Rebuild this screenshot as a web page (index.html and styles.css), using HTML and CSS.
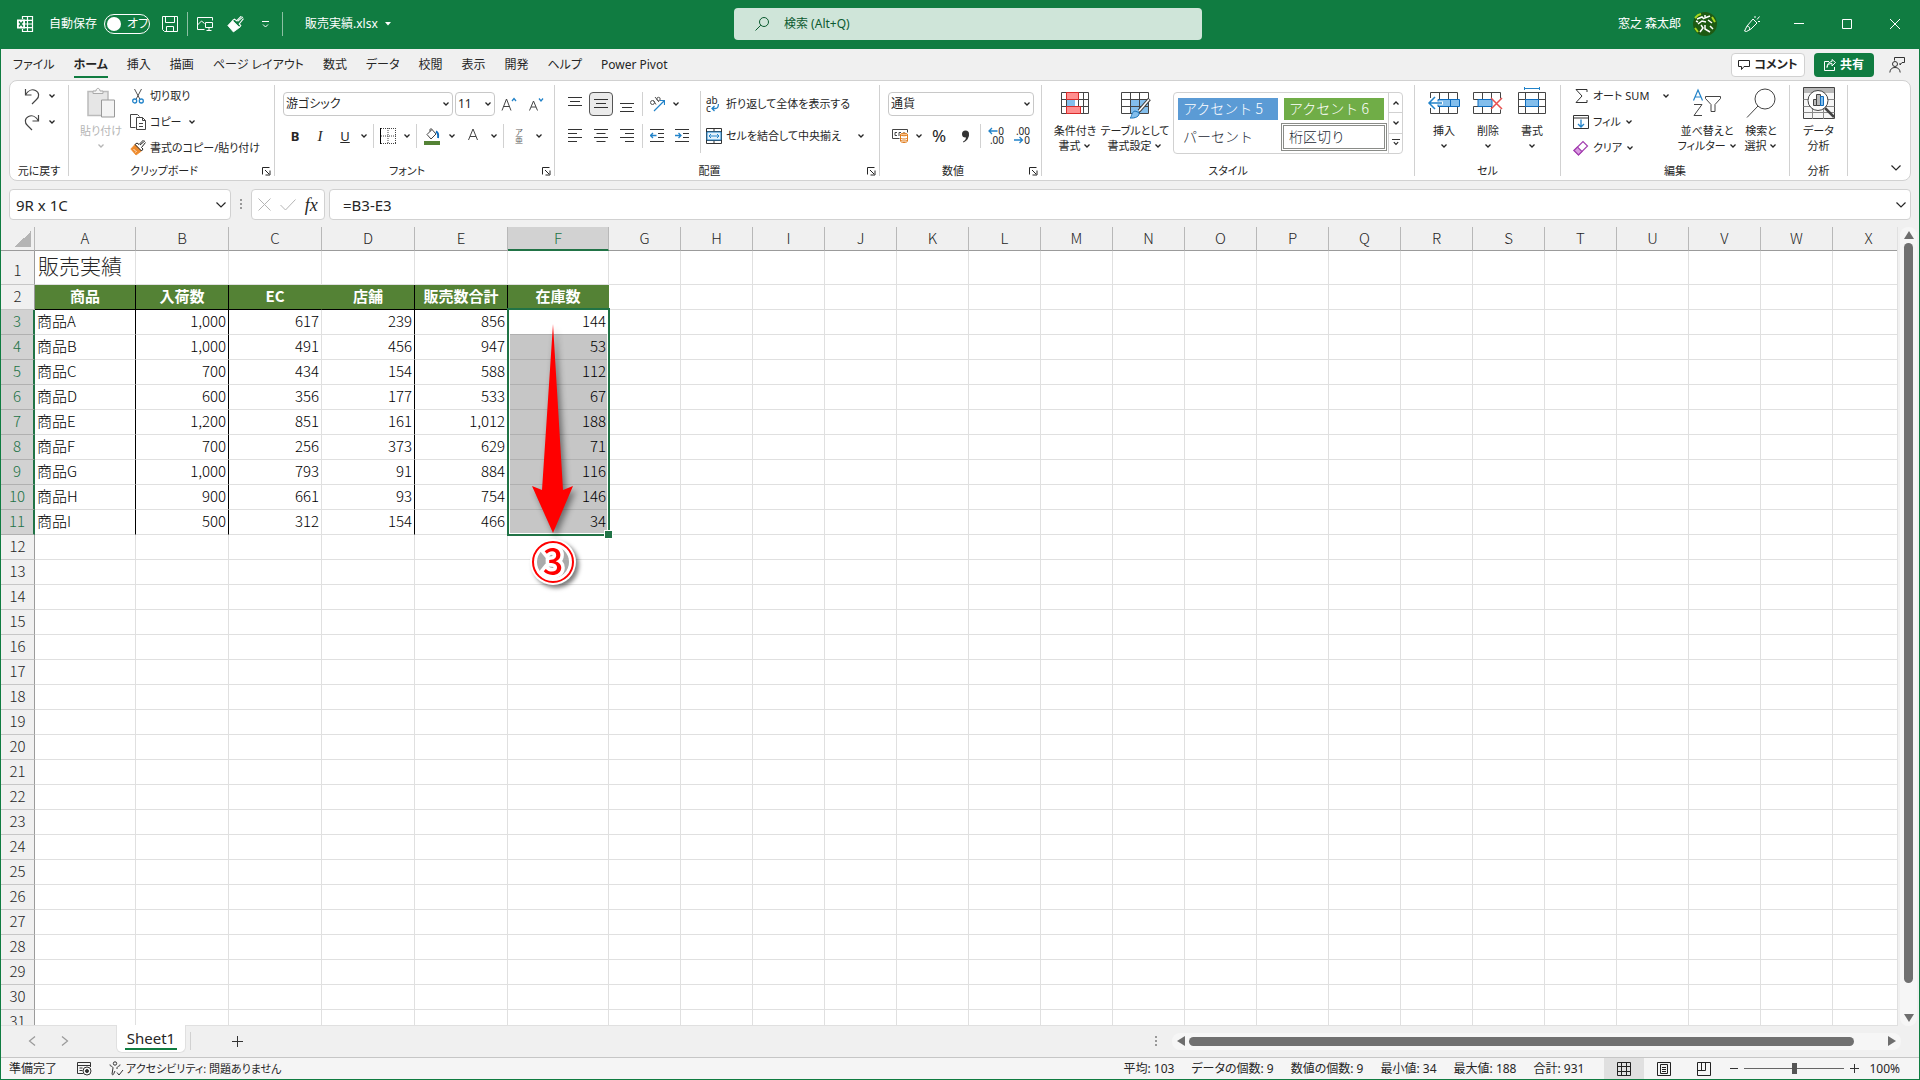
FILE: index.html
```html
<!DOCTYPE html>
<html lang="ja">
<head>
    <meta charset="UTF-8">
    <meta name="viewport" content="width=device-width, initial-scale=1.0">
    <title>販売実績.xlsx - Excel</title>
    <link rel="stylesheet" href="styles.css">
</head>
<body>
    <!-- Shared icons -->
    <svg class="sprite" width="0" height="0">
        <symbol id="chev" viewBox="0 0 8 8"><path d="M1.5 2.5L4 5l2.500-2.500" fill="none" stroke="currentColor" stroke-width="1.300"/></symbol>
        <symbol id="chev-up" viewBox="0 0 8 8"><path d="M1.500 5.500L4 3l2.500 2.500" fill="none" stroke="currentColor" stroke-width="1.300"/></symbol>
        <symbol id="chev-big" viewBox="0 0 12 12"><path d="M1.500 3.500L6 8l4.500-4.500" fill="none" stroke="currentColor" stroke-width="1.200"/></symbol>
        <symbol id="launch" viewBox="0 0 9 9"><path d="M.5 7.500V.5h7M3 3l4 4M8 3.500V8H3.500" fill="none" stroke="currentColor"/></symbol>
        <symbol id="search" viewBox="0 0 16 16"><circle cx="10" cy="6" r="4.500" fill="none" stroke="currentColor"/><path d="M6.800 9.200L1.500 14.500" stroke="currentColor"/></symbol>
        <symbol id="brush" viewBox="0 0 16 16"><path class="bristle" d="M5 4.500L.8 9 6 15l5.500-4z" stroke-width=".8"/><path d="M3.500 9.500l2 1M5.500 12.500l1-1.500" stroke="#fff" stroke-width=".8"/><path d="M15 .8l-5 4.200M5 4.500L11.500 11M5 4.500l2-1.500 2 1.500L13.500 0M11.500 11l1.500-2-1.500-1.500L15.500 2.500" fill="none" stroke="currentColor"/></symbol>
    </svg>

    <header class="titlebar">
        <div class="title-left">
            <svg class="app-icon" width="18" height="18" viewBox="0 0 18 18"><g fill="none" stroke="#fff" stroke-width="1.200"><path d="M6.500 4V1.500H16.500v15H6.500V14M11.500 1.500v15M6.500 5.300h10M6.500 9h10M6.500 12.700h10"/></g><path d="M1 4.500h8v9H1z" fill="#fff"/><path d="M3 6.500l4 5M7 6.500l-4 5" stroke="#107c41" stroke-width="1.400"/></svg>
            <label class="autosave">自動保存
                <span class="switch"><input type="checkbox">オフ</span>
            </label>
            <button class="tb-btn" aria-label="保存"><svg width="18" height="18" viewBox="0 0 18 18" fill="none" stroke="#fff"><path d="M1.500 1.500h15v15H3.500l-2-2zM4.500 1.500v6h9v-6M5.500 16.500v-5h7v5"/></svg></button>
            <span class="tb-sep"></span>
            <button class="tb-btn" aria-label="画面切り替え"><svg width="18" height="16" viewBox="0 0 18 16" fill="none" stroke="#fff"><path d="M8.500 13.500H1.500v-12h15v3M1.500 9l4-4 3 2.500M9.500 6.500h7v5h-7zM13 11.500v3M10.500 14.500h5"/></svg></button>
            <button class="tb-btn" aria-label="書式のコピー"><svg width="17" height="17"><use href="#brush"/></svg></button>
            <button class="tb-btn" aria-label="クイック アクセス ツール バーのユーザー設定"><svg width="9" height="9" viewBox="0 0 9 9" fill="none" stroke="#fff"><path d="M1 1.500h7M2 4.500L4.500 7 7 4.500"/></svg></button>
            <span class="tb-sep"></span>
            <button class="filename">販売実績.xlsx <svg width="6" height="4" viewBox="0 0 6 4"><path d="M0 0h6L3 3.500z" fill="#fff"/></svg></button>
        </div>
        <label class="search"><svg width="16" height="16"><use href="#search"/></svg><input type="text" placeholder="検索 (Alt+Q)" aria-label="検索"></label>
        <div class="title-right">
            <span class="user">窓之 森太郎</span>
            <svg class="avatar" width="24" height="24" viewBox="0 0 24 24"><circle cx="12" cy="12" r="12" fill="#1e5a12"/><g stroke="#fff" stroke-width="1.500" fill="none"><path d="M4 7l5-2 2 2M12 3v3l5-2M5 12l4-3 4 1M15 8l4 3M8 13l2 3-3 4M12 13v4l5 3M17 14l3 3M3 9l2 1"/></g><path d="M2 6l3-3 3-1M19 5l3 5M2 16l3 4" stroke="#a5d61f" stroke-width="2" fill="none"/></svg>
            <button class="win-btn" aria-label="新機能"><svg width="18" height="18" viewBox="0 0 18 18" fill="none" stroke="#fff"><path d="M10 4l4 4-6 6-4.500 2.500L1.500 16 4 11zM4 11c2 0 3 1.500 2.500 4M12 3V1M14 4.500l2.500-3M15 6.500h2"/></svg></button>
            <button class="win-btn" aria-label="最小化"><svg width="10" height="10" viewBox="0 0 10 10" stroke="#fff"><path d="M0 4.500h10"/></svg></button>
            <button class="win-btn" aria-label="最大化"><svg width="10" height="10" viewBox="0 0 10 10" fill="none" stroke="#fff"><path d="M.5.5h9v9h-9z"/></svg></button>
            <button class="win-btn" aria-label="閉じる"><svg width="10" height="10" viewBox="0 0 10 10" stroke="#fff"><path d="M0 0l10 10M10 0L0 10"/></svg></button>
        </div>
    </header>

    <nav class="tabs">
        <a href="#">ファイル</a>
        <a href="#" class="active">ホーム</a>
        <a href="#">挿入</a>
        <a href="#">描画</a>
        <a href="#">ページ レイアウト</a>
        <a href="#">数式</a>
        <a href="#">データ</a>
        <a href="#">校閲</a>
        <a href="#">表示</a>
        <a href="#">開発</a>
        <a href="#">ヘルプ</a>
        <a href="#">Power Pivot</a>
        <div class="tab-actions">
            <button class="comment"><svg width="12" height="12" viewBox="0 0 12 12" fill="none" stroke="currentColor"><path d="M.5 1.500h11v6H6l-2.500 3v-3h-3z"/></svg>コメント</button>
            <button class="share"><svg width="12" height="12" viewBox="0 0 12 12" fill="none" stroke="currentColor"><path d="M5 2.500H.5v9h10V8M3 8.500c.5-3 2-4 5-4V7l3.500-3.500L8 .5v2c-3 .3-5 2.500-5 6z"/></svg>共有</button>
            <button class="people" aria-label="共同編集"><svg width="16" height="16" viewBox="0 0 16 16" fill="none" stroke="#333"><path d="M5.500 3.500v-3h10v5H13l-2 2.500V6"/><circle cx="6" cy="7" r="2.500"/><path d="M.8 15.500c.4-3.500 2.200-5 5.200-5s4.800 1.500 5.200 5"/></svg></button>
        </div>
    </nav>

    <section class="ribbon">
        <div class="group g-undo">
            <div class="group-body stack">
                <div class="row"><button class="ico" aria-label="元に戻す"><svg width="16" height="17" viewBox="0 0 16 17" fill="none" stroke="#444" stroke-width="1.200"><path d="M1.500 1v6h6M1.500 7C4 2.500 8 .8 11.500 2.500c4 2 4 6.500 1 9L8 16"/></svg></button><button class="drop" aria-label="履歴"><svg><use href="#chev"/></svg></button></div>
                <div class="row"><button class="ico" aria-label="やり直し"><svg width="16" height="17" viewBox="0 0 16 17" fill="none" stroke="#444" stroke-width="1.200"><path d="M14.500 1v6h-6M14.500 7C12 2.500 8 .8 4.500 2.500c-4 2-4 6.500-1 9L8 16"/></svg></button><button class="drop" aria-label="履歴"><svg><use href="#chev"/></svg></button></div>
            </div>
            <div class="group-foot"><span>元に戻す</span></div>
        </div>

        <div class="group g-clip">
            <div class="group-body">
                <button class="big disabled"><svg width="28" height="31" viewBox="0 0 28 31"><path d="M1 4h20v24H1z" fill="#e6e6e6" stroke="#bbb" stroke-width="1.500"/><path d="M6 6V3.500h3C9 0 13 0 13 3.500h3V6z" fill="#f4f4f4" stroke="#aaa"/><path d="M14.500 12.500h13v17h-13z" fill="#f4f4f4" stroke="#999"/></svg><span>貼り付け</span><svg class="chev"><use href="#chev"/></svg></button>
                <div class="stack">
                    <button class="cmd"><span class="cmd-ico"><svg width="12" height="16" viewBox="0 0 12 16" fill="none"><path d="M2.500 1l5.300 10M9.500 1L4.200 11" stroke="#555"/><circle cx="2.700" cy="13" r="2" stroke="#2283c9" stroke-width="1.300"/><circle cx="9.300" cy="13" r="2" stroke="#2283c9" stroke-width="1.300"/></svg></span>切り取り</button>
                    <div class="row"><button class="cmd w-copy"><span class="cmd-ico"><svg width="16" height="16" viewBox="0 0 16 16" fill="none" stroke="#444"><path d="M5.500 13.500H.5V.5h7l2 2M6.500 3.500h6l3 3v9h-9zM12.500 3.500v3h3M9 9.500h4M9 12.500h4"/></svg></span>コピー</button><button class="drop" aria-label="コピーのオプション"><svg><use href="#chev"/></svg></button></div>
                    <button class="cmd brush-orange"><span class="cmd-ico"><svg width="16" height="16"><use href="#brush"/></svg></span>書式のコピー/貼り付け</button>
                </div>
            </div>
            <div class="group-foot"><span>クリップボード</span><button class="launcher" aria-label="クリップボードの設定"><svg width="9" height="9"><use href="#launch"/></svg></button></div>
        </div>

        <div class="group g-font">
            <div class="group-body rows">
                <div class="row">
                    <label class="combo font-name"><select aria-label="フォント"><option>游ゴシック</option></select><svg><use href="#chev"/></svg></label>
                    <label class="combo font-size"><select aria-label="フォント サイズ"><option>11</option></select><svg><use href="#chev"/></svg></label>
                    <button class="ico grow" aria-label="フォント サイズの拡大"><svg width="16" height="16" viewBox="0 0 16 16" fill="none"><path d="M1 14.500L5.500 3 10 14.500M2.500 10.500h6" stroke="#444"/><path d="M11 5l2-2.500L15 5" stroke="#2283c9" stroke-width="1.300"/></svg></button>
                    <button class="ico" aria-label="フォント サイズの縮小"><svg width="16" height="16" viewBox="0 0 16 16" fill="none"><path d="M1.500 14.500L5.500 5 9.500 14.500M3 11h5" stroke="#444"/><path d="M11 2.500L13 5l2-2.500" stroke="#2283c9" stroke-width="1.300"/></svg></button>
                </div>
                <div class="row">
                    <button class="ico narrow bold">B</button>
                    <button class="ico italic">I</button>
                    <button class="ico narrow underline">U</button><button class="drop" aria-label="下線"><svg><use href="#chev"/></svg></button>
                    <span class="sep"></span>
                    <button class="ico narrow" aria-label="罫線"><svg width="16" height="16" viewBox="0 0 16 16" fill="none" stroke="#444"><path d="M1 .5h15M1 15.500h15M15.500 0v16M8 0v16M1 8h15" stroke-dasharray="1 1"/><path d="M.5 0v16" stroke="#000"/></svg></button><button class="drop" aria-label="罫線の種類"><svg><use href="#chev"/></svg></button>
                    <span class="sep"></span>
                    <button class="ico" aria-label="塗りつぶしの色"><svg width="16" height="17" viewBox="0 0 16 17" fill="none"><path d="M3 6.500L8 1.500l4 4.500-5 5zM6 3.500V1.500c0-1 2-1 2 0" stroke="#444"/><path d="M12 3.500c2 1 2.500 3.500 2 6.500" stroke="#0f6cbd" stroke-width="2"/><path d="M0 13h16v4H0z" fill="#548235"/></svg></button><button class="drop" aria-label="塗りつぶしの色の選択"><svg><use href="#chev"/></svg></button>
                    <button class="ico grow" aria-label="フォントの色"><svg width="12" height="17" viewBox="0 0 12 17" fill="none" stroke="#444"><path d="M1.500 12L6 1l4.500 11M3 8.500h6"/></svg></button><button class="drop" aria-label="フォントの色の選択"><svg><use href="#chev"/></svg></button>
                    <span class="sep"></span>
                    <button class="ico ruby"><span>ア</span><span>亜</span></button><button class="drop" aria-label="ふりがな"><svg><use href="#chev"/></svg></button>
                </div>
            </div>
            <div class="group-foot"><span>フォント</span><button class="launcher" aria-label="フォントの設定"><svg width="9" height="9"><use href="#launch"/></svg></button></div>
        </div>

        <div class="group g-align">
            <div class="group-body">
                <div class="rows">
                    <div class="row">
                        <button class="ico" aria-label="上揃え"><svg width="14" height="18" viewBox="0 0 14 18" stroke="#333"><path d="M0 2.500h14M2 6.500h10M0 10.500h14"/></svg></button>
                        <button class="ico pressed" aria-label="上下中央揃え"><svg width="14" height="12" viewBox="0 0 14 12" stroke="#333"><path d="M0 1.500h14M2 5.500h10M0 9.500h14"/></svg></button>
                        <button class="ico" aria-label="下揃え"><svg width="14" height="18" viewBox="0 0 14 18" stroke="#333"><path d="M0 8.500h14M2 12.500h10M0 16.500h14"/></svg></button>
                        <span class="sep"></span>
                        <button class="ico narrow" aria-label="方向"><svg width="16" height="16" viewBox="0 0 16 16" fill="none"><path d="M5 15L15 5M11 4.500h4.500V9" stroke="#2283c9" stroke-width="1.200"/><circle cx="3.500" cy="6.500" r="2" stroke="#555"/><path d="M4.500 4.500l2.500 4M6 1l4 5" stroke="#555"/><circle cx="9.500" cy="3" r="1.700" stroke="#555"/></svg></button><button class="drop" aria-label="方向の選択"><svg><use href="#chev"/></svg></button>
                    </div>
                    <div class="row">
                        <button class="ico" aria-label="左揃え"><svg width="14" height="14" viewBox="0 0 14 14" stroke="#333"><path d="M0 .5h14M0 4.500h9M0 8.500h14M0 12.500h9"/></svg></button>
                        <button class="ico" aria-label="中央揃え"><svg width="14" height="14" viewBox="0 0 14 14" stroke="#333"><path d="M0 .5h14M2.500 4.500h9M0 8.500h14M2.500 12.500h9"/></svg></button>
                        <button class="ico" aria-label="右揃え"><svg width="14" height="14" viewBox="0 0 14 14" stroke="#333"><path d="M0 .5h14M5 4.500h9M0 8.500h14M5 12.500h9"/></svg></button>
                        <span class="sep"></span>
                        <button class="ico narrow" aria-label="インデントを減らす"><svg width="14" height="14" viewBox="0 0 14 14" fill="none"><path d="M0 .5h14M8 4.500h6M8 8.500h6M0 12.500h14" stroke="#333"/><path d="M6.500 6.500h-6M3 4L.5 6.500 3 9" stroke="#2283c9" stroke-width="1.300"/></svg></button>
                        <button class="ico" aria-label="インデントを増やす"><svg width="14" height="14" viewBox="0 0 14 14" fill="none"><path d="M0 .5h14M8 4.500h6M8 8.500h6M0 12.500h14" stroke="#333"/><path d="M0 6.500h6M3.500 4L6 6.500 3.500 9" stroke="#2283c9" stroke-width="1.300"/></svg></button>
                    </div>
                </div>
                <span class="sep tall"></span>
                <div class="rows">
                    <button class="cmd"><span class="cmd-ico wrap-ico"><span>ab</span><span>c<svg width="8" height="8" viewBox="0 0 8 8" fill="none" stroke="#2283c9" stroke-width="1.300"><path d="M7.300 0c.3 3-1 4.500-3 4.500H1M3.500 2L1 4.500 3.500 7"/></svg></span></span>折り返して全体を表示する</button>
                    <div class="row"><button class="cmd w-merge"><span class="cmd-ico"><svg width="16" height="16" viewBox="0 0 16 16" fill="none"><path d="M.5.5h15v15H.5zM.5 3.500h15M.5 12.500h15M8 .5v3M8 12.500v3" stroke="#333"/><path d="M1 4h14v8H1z" fill="#e3f1fb" stroke="#2283c9"/><path d="M3 8h10M5 6L3 8l2 2M11 6l2 2-2 2" stroke="#2283c9"/></svg></span>セルを結合して中央揃え</button><button class="drop" aria-label="結合の種類"><svg><use href="#chev"/></svg></button></div>
                </div>
            </div>
            <div class="group-foot"><span>配置</span><button class="launcher" aria-label="配置の設定"><svg width="9" height="9"><use href="#launch"/></svg></button></div>
        </div>

        <div class="group g-number">
            <div class="group-body rows">
                <div class="row"><label class="combo num-format"><select aria-label="数値の書式"><option>通貨</option></select><svg><use href="#chev"/></svg></label></div>
                <div class="row">
                    <button class="ico narrow" aria-label="通貨表示形式"><svg width="17" height="14" viewBox="0 0 17 14" fill="none"><path d="M7.500 9.500h-7v-9h15v3" stroke="#444"/><path d="M5 3.500H3v3h2M7 7V3.500h2M11 4h2" stroke="#444"/><path d="M8.500 5.500v6.500c0 2 7 2 7 0V5.500z" fill="#fff" stroke="#e07b1a"/><ellipse cx="12" cy="5.500" rx="3.500" ry="1.300" fill="#f9c48b" stroke="#e07b1a"/><path d="M8.500 8.500c0 2 7 2 7 0M8.500 10.500c0 2 7 2 7 0" stroke="#e07b1a"/></svg></button><button class="drop" aria-label="通貨の選択"><svg><use href="#chev"/></svg></button>
                    <button class="ico percent">%</button>
                    <button class="ico" aria-label="桁区切りスタイル"><svg width="9" height="13" viewBox="0 0 9 13"><circle cx="4.500" cy="4" r="3.500" fill="#333"/><path d="M8 4c0 4-2 7-5.500 8.500L2 11.500C4 10.500 5 9 5 7z" fill="#333"/></svg></button>
                    <span class="sep"></span>
                    <button class="ico dec" aria-label="小数点以下の表示桁数を増やす"><span><svg width="10" height="8" viewBox="0 0 10 8" fill="none" stroke="#2283c9" stroke-width="1.300"><path d="M9.500 4H1M4 1L1 4l3 3"/></svg>0</span><span>.00</span></button>
                    <button class="ico dec" aria-label="小数点以下の表示桁数を減らす"><span>.00</span><span><svg width="10" height="8" viewBox="0 0 10 8" fill="none" stroke="#2283c9" stroke-width="1.300"><path d="M0 4h8.500M5.500 1l3 3-3 3"/></svg>0</span></button>
                </div>
            </div>
            <div class="group-foot"><span>数値</span><button class="launcher" aria-label="表示形式の設定"><svg width="9" height="9"><use href="#launch"/></svg></button></div>
        </div>

        <div class="group g-style">
            <div class="group-body">
                <button class="big"><svg width="28" height="28" viewBox="0 0 28 28" fill="none"><path d="M.5 3.500h27v21H.5zM.5 10.500h27M.5 17.500h27M5.500 3.500v21M17.500 3.500v21M22.500 3.500v21" stroke="#444"/><path d="M6 11h8v6H6z" fill="#83beec"/><path d="M5.500 3.500h12v7h-12zM5.500 17.500h14v7h-14z" fill="#ff8f8f" stroke="#d92b2b"/></svg><span>条件付き</span><span>書式 <svg class="chev"><use href="#chev"/></svg></span></button>
                <button class="big wide"><svg width="31" height="28" viewBox="0 0 31 28" fill="none"><path d="M10 11h18v14H10z" fill="#83beec"/><path d="M1.500 3.500h27v21h-27zM1.500 10.500h27M1.500 17.500h27M10.500 3.500v21M19.500 3.500v21" stroke="#444"/><path d="M29.500 10L19 22" stroke="#444" stroke-width="3.500"/><path d="M29 10.500L19 22" stroke="#fff" stroke-width="1.500"/><path d="M10 29c2-1 1-6 5-7l4 1.500c1 4-4 6-9 5.500z" fill="#83beec" stroke="#1a73b8"/></svg><span>テーブルとして</span><span>書式設定 <svg class="chev"><use href="#chev"/></svg></span></button>
                <div class="gallery">
                    <div class="gallery-items">
                        <button class="accent5">アクセント 5</button>
                        <button class="accent6">アクセント 6</button>
                        <button>パーセント</button>
                        <button class="picked">桁区切り</button>
                    </div>
                    <div class="gallery-scroll">
                        <button aria-label="前の行"><svg><use href="#chev-up"/></svg></button>
                        <button aria-label="次の行"><svg><use href="#chev"/></svg></button>
                        <button class="more" aria-label="その他"><svg><use href="#chev"/></svg></button>
                    </div>
                </div>
            </div>
            <div class="group-foot"><span>スタイル</span></div>
        </div>

        <div class="group g-cell">
            <div class="group-body">
                <button class="big"><svg width="32" height="28" viewBox="0 0 32 28" fill="none"><path d="M2.500 9V3.500h27V10M2.500 19v5.500h27V18M11.500 3.500v7M20.500 3.500v7M11.500 18v6.500M20.500 18v6.500" stroke="#444"/><path d="M10 10.500h21.500v7H10zM22.500 10.500v7" fill="#83beec" stroke="#0f6cbd"/><path d="M15 14H1.500M7 7.500L1 14l6 6.500" stroke="#fff" stroke-width="3"/><path d="M14 14H1M7 8l-6 6 6 6" stroke="#2283c9" stroke-width="1.500"/></svg><span>挿入</span><svg class="chev"><use href="#chev"/></svg></button>
                <button class="big"><svg width="30" height="28" viewBox="0 0 30 28" fill="none"><path d="M.5 10.500v-7h27v6M.5 17.500v7h27v-4M.5 10.500H5M.5 17.500H5M9.500 3.500v7M18.500 3.500v7M9.500 17.500v7M18.500 17.500v7" stroke="#444"/><path d="M5 10.500h14v7H5z" fill="#83beec" stroke="#0f6cbd"/><path d="M18 9l11 11M29 9L18 20" stroke="#e8504f" stroke-width="1.500"/></svg><span>削除</span><svg class="chev"><use href="#chev"/></svg></button>
                <button class="big"><svg width="28" height="28" viewBox="0 0 28 28" fill="none"><path d="M.5 3.500h27v21H.5zM.5 10.500h27M.5 17.500h27M7.500 3.500v21M20.500 3.500v21" stroke="#444"/><path d="M7.500 10.500h13v7h-13z" fill="#83beec" stroke="#0f6cbd"/><path d="M6.500-2v3M21.500-2v3M6.500-.5h15" stroke="#2283c9"/></svg><span>書式</span><svg class="chev"><use href="#chev"/></svg></button>
            </div>
            <div class="group-foot"><span>セル</span></div>
        </div>

        <div class="group g-edit">
            <div class="group-body">
                <div class="stack edit-cmds">
                    <div class="row"><button class="cmd w-sum"><span class="cmd-ico"><svg width="13" height="14" viewBox="0 0 13 14" fill="none" stroke="#333"><path d="M12 3V.5H1L7 7l-6 6.500h11V11"/></svg></span>オート SUM</button><button class="drop" aria-label="関数の選択"><svg><use href="#chev"/></svg></button></div>
                    <button class="cmd"><span class="cmd-ico"><svg width="16" height="14" viewBox="0 0 16 14" fill="none"><path d="M.5.5h15v13H.5zM.5 3h15" stroke="#333"/><path d="M8 4.500V12M5 9l3 3 3-3" stroke="#2283c9" stroke-width="1.300"/></svg></span>フィル <svg class="chev"><use href="#chev"/></svg></button>
                    <button class="cmd"><span class="cmd-ico"><svg width="16" height="16" viewBox="0 0 16 16" fill="none" stroke="#a33fb0" stroke-width="1.200"><path d="M1 10.500L10 1.500l4.500 4.500-9 9z"/><path d="M1 10.500l3.500-3.500L9 11.500 5.500 15z" fill="#d99be0"/></svg></span>クリア <svg class="chev"><use href="#chev"/></svg></button>
                </div>
                <button class="big"><svg width="28" height="28" viewBox="0 0 28 28" fill="none"><path d="M.5 11.500L5 1l4.500 10.500M2 8h6" stroke="#2283c9" stroke-width="1.200"/><path d="M1 15.500h8L1 26.500h8" stroke="#444"/><path d="M12.500 7.500h15v2l-5.500 6v7h-4v-7l-5.500-6z" stroke="#444"/></svg><span>並べ替えと</span><span>フィルター <svg class="chev"><use href="#chev"/></svg></span></button>
                <button class="big"><svg width="30" height="30" viewBox="0 0 30 30" fill="none" stroke="#444"><circle cx="19" cy="11" r="10"/><path d="M12 18L1 29.500"/></svg><span>検索と</span><span>選択 <svg class="chev"><use href="#chev"/></svg></span></button>
            </div>
            <div class="group-foot"><span>編集</span></div>
        </div>

        <div class="group g-analysis">
            <div class="group-body">
                <button class="big"><svg width="32" height="32" viewBox="0 0 32 32" fill="none"><path d="M.5.5h31v31H.5z" fill="#f6f6f6" stroke="#444"/><path d="M1 1h30v5H1z" fill="#b8b8b8"/><path d="M.5 12.500h31M.5 19.500h31M.5 25.500h31M9.500 6v26M20.500 20v12" stroke="#888"/><circle cx="15" cy="13.500" r="10" fill="#fff" stroke="#444"/><path d="M22 21l9 9" stroke="#444" stroke-width="2.500"/><path d="M10.500 12.500h3v6h-3zM13.500 7.500h4v11h-4z" fill="#bbb" stroke="#444"/><path d="M17.500 9.500h3v9h-3z" fill="#83beec" stroke="#0f6cbd"/></svg><span>データ</span><span>分析</span></button>
            </div>
            <div class="group-foot"><span>分析</span></div>
        </div>
        <button class="collapse" aria-label="リボンを折りたたむ"><svg width="12" height="12"><use href="#chev-big"/></svg></button>
    </section>

    <section class="formula-bar">
        <label class="box name-box"><input type="text" value="9R x 1C" aria-label="名前ボックス"><svg width="12" height="12"><use href="#chev-big"/></svg></label>
        <span class="dots"></span>
        <div class="box fx">
            <button aria-label="キャンセル"><svg width="13" height="13" viewBox="0 0 13 13" stroke="#b5b5b5"><path d="M.5.5l12 12M12.500.5l-12 12"/></svg></button>
            <button aria-label="入力"><svg width="16" height="12" viewBox="0 0 16 12" fill="none" stroke="#b5b5b5"><path d="M.5 6l5 5L15.500.5"/></svg></button>
            <button class="fx-label">fx</button>
        </div>
        <label class="box formula"><input type="text" value="=B3-E3" aria-label="数式バー"><svg width="12" height="12"><use href="#chev-big"/></svg></label>
    </section>

    <main class="workspace">
        <div class="sheet">
            <table id="grid"></table>
        </div>
        <div class="vscroll">
            <svg width="10" height="8" viewBox="0 0 10 8"><path d="M5 0l5 8H0z"/></svg>
            <span class="thumb"></span>
            <svg width="10" height="8" viewBox="0 0 10 8"><path d="M5 8L0 0h10z"/></svg>
        </div>
    </main>

    <section class="sheet-bar">
        <button class="nav-arrow" aria-label="前のシート"><svg width="8" height="10" viewBox="0 0 8 10" fill="none" stroke="#999" stroke-width="1.200"><path d="M7 .5L1.500 5 7 9.500"/></svg></button>
        <button class="nav-arrow" aria-label="次のシート"><svg width="8" height="10" viewBox="0 0 8 10" fill="none" stroke="#999" stroke-width="1.200"><path d="M1 .5L6.500 5 1 9.500"/></svg></button>
        <a href="#" class="sheet-tab"><span>Sheet1</span></a>
        <span class="sep"></span>
        <button class="add-sheet" aria-label="新しいシート"><svg width="11" height="11" viewBox="0 0 11 11" stroke="#333"><path d="M5.500 0v11M0 5.500h11"/></svg></button>
        <span class="dots"></span>
        <div class="hscroll">
            <svg width="8" height="10" viewBox="0 0 8 10"><path d="M0 5l8-5v10z"/></svg>
            <span class="thumb"></span>
            <svg width="8" height="10" viewBox="0 0 8 10"><path d="M8 5L0 0v10z"/></svg>
        </div>
    </section>

    <footer class="status">
        <span>準備完了</span>
        <button class="macro" aria-label="マクロの記録"><svg width="15" height="14" viewBox="0 0 15 14" fill="none" stroke="#333"><path d="M6 11.500H.5V.5h13V5M.5 3.500h13M2.500 6h3M2.500 8.500h3"/><circle cx="10" cy="9" r="4"/><circle cx="10" cy="9" r="1.500" fill="#333"/></svg></button>
        <button class="access"><svg width="15" height="15" viewBox="0 0 15 15" fill="none" stroke="#333"><circle cx="6" cy="2.500" r="1.700"/><path d="M1 3.500c-1 1.500 3 1.500 3 3.500l-1 6c.5 1.500 1.500 1 2-1l1-2M11 3.500c1 1.500-3 1.500-3 3.500v1M8 11.500l2 2.500 4-5"/></svg>アクセシビリティ: 問題ありません</button>
        <div class="stats">
            <span>平均: 103</span>
            <span>データの個数: 9</span>
            <span>数値の個数: 9</span>
            <span>最小値: 34</span>
            <span>最大値: 188</span>
            <span>合計: 931</span>
        </div>
        <div class="views">
            <button class="on" aria-label="標準"><svg width="14" height="14" viewBox="0 0 14 14" fill="none" stroke="#222"><path d="M.5.5h13v13H.5zM.5 4.500h13M.5 9.500h13M4.500.5v13M9.500.5v13"/></svg></button>
            <button aria-label="ページ レイアウト"><svg width="14" height="14" viewBox="0 0 14 14" fill="none" stroke="#222"><path d="M.5.5h13v13H.5zM3.500 2.500h7v9h-7zM5 5.500h4M5 7.500h4M5 9.500h4"/></svg></button>
            <button aria-label="改ページ プレビュー"><svg width="14" height="14" viewBox="0 0 14 14" fill="none" stroke="#222"><path d="M.5.5h13v13H.5zM.5 8.500h8v-8M4.500.5v8"/></svg></button>
        </div>
        <div class="zoom">
            <button aria-label="縮小"><svg width="8" height="9" viewBox="0 0 8 9" stroke="#333"><path d="M0 4.500h8"/></svg></button>
            <input type="range" min="0" max="100" value="50" aria-label="ズーム">
            <button aria-label="拡大"><svg width="9" height="9" viewBox="0 0 9 9" stroke="#333"><path d="M0 4.500h9M4.500 0v9"/></svg></button>
            <button class="zoom-value">100%</button>
        </div>
    </footer>

    <!-- Drawn over the selected range -->
    <template id="marks">
        <div class="selection"></div>
        <svg class="arrow" width="60" height="230" viewBox="0 0 60 230"><path d="M21 6l10 166 10-4-20 47L0 168l10 4z" fill="#f00"/></svg>
        <svg class="step" width="56" height="56" viewBox="0 0 56 56"><circle cx="26" cy="26" r="23" fill="#fff"/><circle cx="26" cy="26" r="20" fill="#fff" stroke="#f00" stroke-width="2"/><circle cx="26" cy="26" r="16" fill="#aaa"/><text x="26" y="39" text-anchor="middle">3</text></svg>
    </template>

    <script>
        const columns = 'ABCDEFGHIJKLMNOPQRSTUVWX'.split('');
        const titles = ['商品', '入荷数', 'EC', '店舗', '販売数合計', '在庫数'];
        const items = [
            ['商品A', '1,000', '617', '239', '856', '144'],
            ['商品B', '1,000', '491', '456', '947', '53'],
            ['商品C', '700', '434', '154', '588', '112'],
            ['商品D', '600', '356', '177', '533', '67'],
            ['商品E', '1,200', '851', '161', '1,012', '188'],
            ['商品F', '700', '256', '373', '629', '71'],
            ['商品G', '1,000', '793', '91', '884', '116'],
            ['商品H', '900', '661', '93', '754', '146'],
            ['商品I', '500', '312', '154', '466', '34']
        ];

        // Text of one cell, row numbers start at 1
        function cellText(row, col) {
            if (row === 1) return col === 0 ? '販売実績' : '';
            if (row === 2) return titles[col] || '';
            return (items[row - 3] || [])[col] || '';
        }

        function rowClass(row) {
            if (row === 1) return 'title-row';
            if (row === 2) return 'head-row';
            return items[row - 3] ? 'data-row' : '';
        }

        // Only as many rows as fit in the window
        const rowCount = Math.ceil((document.querySelector('.sheet').clientHeight - 33) / 25);

        let html = '<colgroup><col class="c-num"><col class="c-wide"><col class="c-mid"><col class="c-mid"><col class="c-mid"><col class="c-mid"><col class="c-wide">';
        html += '<col class="c-std">'.repeat(columns.length - 6) + '</colgroup>';
        html += '<thead><tr><th class="corner"></th>';
        columns.forEach(c => {
            html += `<th class="${c === 'F' ? 'sel' : ''}">${c}</th>`;
        });
        html += '</tr></thead><tbody>';
        for (let r = 1; r <= rowCount; r++) {
            html += `<tr class="${rowClass(r)}"><th>${r}</th>`;
            columns.forEach((c, i) => {
                html += `<td class="col-${c.toLowerCase()}">${cellText(r, i)}</td>`;
            });
            html += '</tr>';
        }
        const grid = document.getElementById('grid');
        grid.innerHTML = html + '</tbody>';

        const active = grid.querySelector('.data-row .col-f');
        active.classList.add('active-cell');
        active.appendChild(document.getElementById('marks').content.cloneNode(true));
    </script>
</body>
</html>
```

FILE: styles.css
```css
* {
    box-sizing: border-box;
}

body {
    margin: 0;
    height: 100vh;
    display: flex;
    flex-direction: column;
    overflow: hidden;
    background-color: #f0f0f0;
    border: 1px solid #107c41;
    border-top: none;
    font-family: "Noto Sans", "Noto Sans CJK JP", sans-serif;
    font-size: 12px;
    line-height: 16px;
    font-feature-settings: "palt";
    color: #262626;
}

button, input, select {
    font: inherit;
    font-feature-settings: inherit;
    color: inherit;
    background: none;
    border: none;
    padding: 0;
    margin: 0;
    outline: none;
}

button {
    display: flex;
    align-items: center;
    justify-content: center;
    white-space: nowrap;
}

a {
    color: inherit;
    text-decoration: none;
}

svg {
    flex: none;
}

.sprite {
    position: absolute;
}

/* Title bar */
.titlebar {
    height: 49px;
    padding-bottom: 1px;
    background-color: #107c41;
    color: #fff;
    display: grid;
    grid-template-columns: 733fr 468px 717fr;
    align-items: center;
}

.title-left, .title-right {
    display: flex;
    align-items: center;
}

.title-left {
    padding-left: 15px;
}

.title-right {
    justify-content: flex-end;
}

.autosave {
    display: flex;
    align-items: center;
    gap: 7px;
    margin: 0 5px 0 15px;
}

.switch {
    width: 46px;
    height: 20px;
    border: 1px solid #fff;
    border-radius: 10px;
    display: flex;
    align-items: center;
    gap: 6px;
    padding-left: 2px;
}

.switch input {
    appearance: none;
    width: 14px;
    height: 14px;
    border-radius: 50%;
    background-color: #fff;
}

.tb-btn {
    width: 30px;
    height: 32px;
}

.tb-sep {
    width: 1px;
    height: 24px;
    margin: 0 2px;
    background-color: #8cc0a3;
}

.filename {
    gap: 7px;
    margin-left: 20px;
}

.bristle {
    fill: var(--bristle, currentColor);
    stroke: var(--bristle, currentColor);
}

.search {
    height: 32px;
    border-radius: 4px;
    background-color: #cfe5d9;
    color: #0b5a2f;
    display: flex;
    align-items: center;
    gap: 14px;
    padding-left: 20px;
}

.search input {
    flex: 1;
}

.search input::placeholder {
    color: #0b5a2f;
    opacity: 1;
}

.avatar {
    margin: 0 12px;
}

.win-btn {
    width: 48px;
    height: 40px;
}

.win-btn:first-of-type {
    width: 46px;
}

/* Ribbon tabs */
.tabs {
    height: 31px;
    padding: 0 6px 0 12px;
    display: flex;
    align-items: center;
    gap: 19px;
}

.tabs a {
    height: 27px;
    line-height: 28px;
    white-space: nowrap;
    border-bottom: 2px solid transparent;
}

.tabs .active {
    font-weight: bold;
    border-color: #107c41;
}

.tab-actions {
    margin-left: auto;
    display: flex;
    gap: 9px;
    font-weight: bold;
}

.tab-actions button {
    height: 24px;
    gap: 4px;
    border-radius: 4px;
}

.comment {
    width: 74px;
    background-color: #fff;
    border: 1px solid #d1d1d1;
}

.share {
    width: 60px;
    background-color: #107c41;
    color: #fff;
}

.people {
    width: 32px;
    margin-left: -2px;
}

/* Ribbon */
.ribbon {
    margin: 0 8px;
    min-height: 101px;
    background-color: #fff;
    border: 1px solid #d1d1d1;
    border-radius: 8px;
    display: flex;
    align-items: stretch;
    font-size: 11px;
}

.group {
    display: flex;
    flex-direction: column;
    justify-content: space-between;
    margin: 4px 0;
    border-right: 1px solid #d1d1d1;
}

.g-undo { width: 59px; }
.g-clip { width: 206px; }
.g-font { width: 280px; }
.g-align { width: 325px; }
.g-number { width: 162px; }
.g-style { width: 373px; }
.g-cell { width: 146px; }
.g-edit { width: 229px; }
.g-analysis { width: 58px; }

.group-body {
    display: flex;
}

.row {
    display: flex;
    align-items: center;
}

.stack {
    display: flex;
    flex-direction: column;
    margin-top: -2px;
}

.stack > * {
    height: 26px;
}

.rows {
    display: flex;
    flex-direction: column;
    padding-top: 3px;
}

.rows > * {
    height: 32px;
}

.group-foot {
    display: flex;
    align-items: center;
    height: 16px;
    margin-bottom: -3px;
}

.group-foot span {
    flex: 1;
    text-align: center;
}

.launcher {
    width: 15px;
}

.ico {
    width: 26px;
    height: 24px;
}

.ico.narrow {
    width: 24px;
}

.ico.grow {
    width: 28px;
}

.drop {
    width: 14px;
    height: 24px;
}

.drop svg, .chev, .combo svg, .gallery-scroll svg {
    width: 8px;
    height: 8px;
}

.sep {
    width: 1px;
    height: 24px;
    margin: 0 2px;
    background-color: #d1d1d1;
}

.sep.tall {
    height: 62px;
    margin: 6px 5px 0 5px;
}

.cmd {
    justify-content: flex-start;
    gap: 4px;
}

.cmd-ico {
    width: 16px;
    display: flex;
    justify-content: center;
}

.big {
    width: 44px;
    flex-direction: column;
    justify-content: flex-start;
    line-height: 15px;
}

.big > svg:first-child {
    height: 32px;
    margin: 2px 0 4px;
    overflow: visible;
}

.big > .chev {
    margin-top: 4px;
}

.big.disabled {
    width: 50px;
    color: #b5b5b5;
}

.big.wide {
    width: 76px;
}

.g-undo .group-body {
    padding-left: 9px;
}

.g-clip .group-body {
    padding-left: 7px;
    gap: 4px;
}

.g-clip .stack button {
    height: 26px;
}

.w-copy {
    width: 55px;
}

.brush-orange svg {
    --bristle: #ee8a2c;
}

.g-font .group-body, .g-number .group-body {
    padding-left: 8px;
}

.combo {
    height: 24px;
    border: 1px solid #c8c8c8;
    border-radius: 4px;
    display: flex;
    align-items: center;
    padding: 0 2px;
}

.combo select {
    flex: 1;
    appearance: none;
    font-size: 12px;
}

.font-name {
    width: 170px;
    margin-right: 2px;
}

.font-size {
    width: 40px;
}

.num-format {
    width: 146px;
}

.bold {
    font-weight: bold;
    font-size: 13px;
}

.italic {
    font-family: "Liberation Serif", serif;
    font-style: italic;
    font-size: 15px;
}

.underline {
    text-decoration: underline;
    font-size: 13px;
}

.ruby {
    flex-direction: column;
    font-size: 8px;
    line-height: 8px;
    color: #666;
}

.g-align .group-body {
    padding-left: 7px;
}

.pressed {
    width: 24px;
    margin: 0 1px;
    background-color: #ebebeb;
    border: 1px solid #555;
    border-radius: 4px;
}

.wrap-ico {
    flex-direction: column;
    font-size: 10px;
    line-height: 8px;
    text-align: left;
}

.w-merge {
    width: 148px;
}

.percent {
    font-size: 17px;
}

.dec {
    flex-direction: column;
    align-items: flex-end;
    padding-right: 5px;
    font-size: 10px;
    line-height: 9px;
}

.g-style .group-body {
    padding-left: 11px;
}

.gallery {
    width: 230px;
    height: 62px;
    margin-top: 7px;
    border: 1px solid #d1d1d1;
    border-radius: 4px;
    display: flex;
}

.gallery-items {
    flex: 1;
    display: grid;
    grid-template-columns: 100px 100px;
    grid-template-rows: 22px 22px;
    gap: 6px;
    padding: 5px 4px;
    font-family: "Noto Sans CJK JP", sans-serif;
    font-size: 14px;
    font-weight: 300;
    font-feature-settings: normal;
}

.gallery-items button {
    justify-content: flex-start;
    padding: 0 0 3px 5px;
    color: #1a2733;
}

.gallery-items .accent5 {
    background-color: #5b9bd5;
    color: #fff;
}

.gallery-items .accent6 {
    background-color: #70ad47;
    color: #fff;
}

.gallery-items .picked {
    margin: -3px;
    border: 3px double #8a8c88;
}

.gallery-scroll {
    width: 15px;
    border-left: 1px solid #d1d1d1;
    display: flex;
    flex-direction: column;
}

.gallery-scroll button {
    flex: 1;
    border-bottom: 1px solid #d1d1d1;
}

.gallery-scroll .more {
    border-bottom: none;
}

.more svg {
    border-top: 1px solid #333;
}

.g-cell .group-body {
    padding-left: 7px;
}

.g-edit .group-body {
    padding-left: 12px;
}

.edit-cmds {
    width: 107px;
}

.w-sum {
    width: 86px;
}

.g-edit .big {
    width: 54px;
}

.g-analysis .big {
    width: 57px;
}

.collapse {
    margin: auto 8px 6px auto;
}

/* Formula bar */
.formula-bar {
    display: flex;
    align-items: center;
    margin: 8px 8px 7px;
    font-size: 15px;
}

.box {
    height: 31px;
    background-color: #fff;
    border: 1px solid #d1d1d1;
    border-radius: 4px;
    display: flex;
    align-items: center;
    padding-right: 3px;
}

.box input {
    flex: 1;
    min-width: 0;
}

.name-box {
    width: 222px;
    padding-left: 6px;
}

.dots {
    width: 2px;
    height: 11px;
    margin: 0 9px;
    background: repeating-linear-gradient(#999 0 2px, transparent 2px 4px);
}

.box.fx {
    width: 74px;
    margin-right: 4px;
    padding: 0 2px;
    justify-content: space-around;
}

.fx-label {
    font-family: "Liberation Serif", serif;
    font-style: italic;
    font-size: 18px;
}

.formula {
    flex: 1;
    padding-left: 13px;
}

/* Worksheet */
.workspace {
    flex: 1;
    min-height: 0;
    display: flex;
}

.sheet {
    flex: 1;
    min-width: 0;
    overflow: hidden;
    background-color: #fff;
    border-right: 1px solid #e0e0e0;
    border-bottom: 1px solid #e0e0e0;
}

table {
    width: 1904px;
    table-layout: fixed;
    border-collapse: separate;
    border-spacing: 0;
    font-family: "Noto Sans CJK JP", sans-serif;
    font-size: 15px;
    font-weight: 300;
    font-feature-settings: normal;
    line-height: 22px;
}

.c-num { width: 34px; }
.c-wide { width: 101px; }
.c-mid { width: 93px; }
.c-std { width: 72px; }

th, td {
    height: 25px;
    padding: 0 0 2px;
    white-space: nowrap;
    border-right: 1px solid #e0e0e0;
    border-bottom: 1px solid #e0e0e0;
}

th {
    font-weight: 300;
    background-color: #f0f0f0;
}

thead th {
    height: 24px;
    padding-bottom: 1px;
    border-right-color: #b8b8b8;
    border-bottom-color: #9b9b9b;
}

thead .sel {
    padding-bottom: 0;
    color: #217346;
    background-color: #d2d2d2;
    border-bottom: 2px solid #217346;
}

.corner {
    background: linear-gradient(135deg, transparent 50%, #b4b4b4 50%) 14px 4px / 16px 16px no-repeat #f0f0f0;
}

tbody th {
    border-right-color: #9b9b9b;
    border-bottom-color: #c6c6c6;
}

.title-row > * {
    height: 34px;
}

.title-row th {
    padding-top: 6px;
}

.title-row .col-a {
    padding: 0 0 6px 3px;
    font-size: 21px;
}

.head-row .col-a, .head-row .col-b, .head-row .col-c,
.head-row .col-d, .head-row .col-e, .head-row .col-f {
    background-color: #548235;
    border-right-color: #548235;
    border-bottom-color: #000;
    color: #fff;
    font-size: 15px;
    font-weight: bold;
    text-align: center;
}

.data-row th {
    color: #217346;
    background-color: #d2d2d2;
    border-bottom-color: #b0b0b0;
    border-right: 2px solid #217346;
}

.data-row td {
    text-align: right;
    padding-right: 2px;
    color: #000;
}

.data-row .col-a {
    text-align: left;
    padding-left: 2px;
}

.head-row .col-a, .head-row .col-b, .head-row .col-d, .head-row .col-e,
.data-row .col-a, .data-row .col-b, .data-row .col-d {
    border-right-color: #000;
}

.data-row .col-f {
    background-color: #c6c6c6;
    border-bottom-color: #b0b0b0;
}

.data-row .active-cell {
    position: relative;
    background-color: #fff;
}

.selection {
    position: absolute;
    left: -1px;
    top: -2px;
    width: 103px;
    height: 228px;
    border: 2px solid #217346;
    box-shadow: inset 0 0 0 1px #fff;
}

.selection::after {
    content: "";
    position: absolute;
    right: -5px;
    bottom: -5px;
    width: 7px;
    height: 7px;
    background-color: #217346;
    border: 1px solid #fff;
}

.arrow {
    position: absolute;
    left: 24px;
    top: 8px;
    overflow: visible;
    filter: drop-shadow(3px 4px 3px rgba(0, 0, 0, 0.45));
}

.step {
    position: absolute;
    left: 19px;
    top: 226px;
    filter: drop-shadow(3px 3px 2px rgba(0, 0, 0, 0.5));
}

.step text {
    font-size: 36px;
    font-weight: 500;
    fill: #f00;
    stroke: #fff;
    stroke-width: 7px;
    paint-order: stroke;
}

/* Scroll bars */
.vscroll {
    width: 17px;
    margin: 0 2px;
    padding: 4px 0;
    border-radius: 8px;
    background-color: #f6f6f6;
    display: flex;
    flex-direction: column;
    align-items: center;
    fill: #6e6e6e;
}

.vscroll .thumb {
    flex: 1;
    width: 9px;
    margin: 4px 0 31px;
}

.thumb {
    border-radius: 5px;
    background-color: #707070;
}

.sheet-bar {
    height: 31px;
    padding-bottom: 1px;
    display: flex;
    align-items: center;
    font-size: 15px;
}

.nav-arrow {
    width: 33px;
    height: 24px;
}

.nav-arrow:first-child {
    margin-left: 14px;
}

.sheet-tab {
    align-self: flex-start;
    width: 70px;
    height: 28px;
    margin: -1px 2px 0 35px;
    padding-top: 2px;
    background-color: #fff;
    border: 1px solid #e0e0e0;
    border-top: none;
    border-radius: 0 0 6px 6px;
    text-align: center;
}

.sheet-tab span {
    display: inline-block;
    height: 23px;
    line-height: 22px;
    border-bottom: 2px solid #107c41;
    padding: 0 2px;
}

.sheet-bar .sep {
    height: 18px;
}

.add-sheet {
    width: 88px;
    height: 24px;
}

.sheet-bar .dots {
    margin: 0 15px 0 auto;
}

.hscroll {
    width: 38%;
    height: 17px;
    margin-right: 18px;
    padding: 0 5px;
    border-radius: 8px;
    background-color: #f6f6f6;
    display: flex;
    align-items: center;
    fill: #6e6e6e;
}

.hscroll .thumb {
    flex: 1;
    height: 9px;
    margin: 0 34px 0 4px;
}

/* Status bar */
.status {
    height: 22px;
    border-top: 1px solid #c6c6c6;
    background-color: #f5f5f5;
    display: flex;
    align-items: center;
    padding-left: 8px;
}

.macro {
    margin: 0 17px 0 20px;
}

.access {
    gap: 2px;
    font-size: 11px;
}

.stats {
    margin-left: auto;
    display: flex;
    gap: 17px;
    padding-right: 20px;
}

.views {
    display: flex;
    align-self: stretch;
}

.views button {
    width: 40px;
}

.views .on {
    background-color: #e0e0e0;
}

.zoom {
    display: flex;
    align-items: center;
    gap: 6px;
    padding: 0 19px 0 6px;
}

.zoom input {
    appearance: none;
    width: 100px;
    height: 11px;
    background: linear-gradient(#666, #666) center / 100% 1px no-repeat;
}

.zoom input::-webkit-slider-thumb {
    appearance: none;
    width: 5px;
    height: 11px;
    background-color: #555;
}

.zoom-value {
    margin-left: 4px;
}
```
